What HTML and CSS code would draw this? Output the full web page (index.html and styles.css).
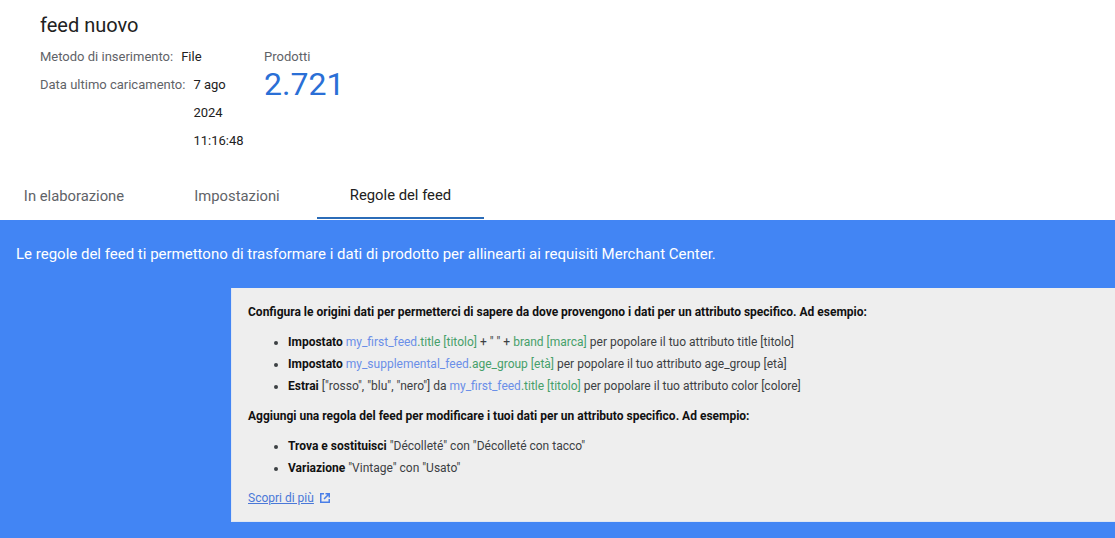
FILE: index.html
```html
<!DOCTYPE html>
<html lang="it">
<head>
<meta charset="utf-8">
<title>feed nuovo</title>
<link rel="stylesheet" href="styles.css">
</head>
<body>
<header class="head">
  <h1 class="title">feed nuovo</h1>
  <div class="summary">
    <div class="meta">
      <div class="row"><span class="label">Metodo di inserimento:</span><span class="value v1">File</span></div>
      <div class="row"><span class="label">Data ultimo caricamento:</span><span class="value v2">7 ago<br>2024<br>11:16:48</span></div>
    </div>
    <div class="stat">
      <div class="stat-label">Prodotti</div>
      <div class="stat-num">2.721</div>
    </div>
  </div>
</header>
<nav class="tabs">
  <a class="tab t1">In elaborazione</a>
  <a class="tab t2">Impostazioni</a>
  <a class="tab t3 active">Regole del feed</a>
</nav>
<section class="panel">
  <p class="lead">Le regole del feed ti permettono di trasformare i dati di prodotto per allinearti ai requisiti Merchant Center.</p>
  <div class="card">
    <p class="h">Configura le origini dati per permetterci di sapere da dove provengono i dati per un attributo specifico. Ad esempio:</p>
    <ul class="list">
      <li><b>Impostato</b> <span class="blue">my_first_feed</span><span class="green">.title [titolo]</span> + " " + <span class="green">brand [marca]</span> per popolare il tuo attributo title [titolo]</li>
      <li><b>Impostato</b> <span class="blue">my_supplemental_feed</span><span class="green">.age_group [età]</span> per popolare il tuo attributo age_group [età]</li>
      <li><b>Estrai</b> ["rosso", "blu", "nero"] da <span class="blue">my_first_feed</span><span class="green">.title [titolo]</span> per popolare il tuo attributo color [colore]</li>
    </ul>
    <p class="h">Aggiungi una regola del feed per modificare i tuoi dati per un attributo specifico. Ad esempio:</p>
    <ul class="list">
      <li><b>Trova e sostituisci</b> "Décolleté" con "Décolleté con tacco"</li>
      <li><b>Variazione</b> "Vintage" con "Usato"</li>
    </ul>
    <p class="more"><a class="link">Scopri di più</a><svg class="ext" viewBox="0 0 12 12" width="12" height="12" aria-hidden="true"><path d="M1 1H5V2.5H2.5V9.5H9.5V7H11V11H1Z" fill="#4a7fe8"/><path d="M6.5 1H11V5.5H9.5V3.6L5.6 7.5L4.5 6.4L8.4 2.5H6.5Z" fill="#4a7fe8"/></svg></p>
  </div>
</section>
</body>
</html>
```
FILE: styles.css
```css
* { box-sizing: border-box; }
html, body { margin: 0; height: 538px; overflow: hidden; }
body { background: #fff; font-family: Roboto, "Liberation Sans", sans-serif; color: #212121; display: flex; flex-direction: column; }
.head { height: 174px; padding: 13px 0 0 40px; }
.title { margin: 0; font-size: 20px; font-weight: 400; line-height: 25px; color: #212121; }
.summary { display: flex; margin-top: 5px; }
.meta { width: 224px; font-size: 13px; }
.row { display: flex; }
.label { color: #5f6368; line-height: 28px; white-space: nowrap; }
.value { color: #212121; line-height: 28px; white-space: nowrap; }
.v1 { margin-left: 8px; }
.v2 { margin-left: 8px; }
.stat-label { font-size: 13px; color: #5f6368; line-height: 28px; }
.stat-num { font-size: 32px; line-height: 26px; color: #2a6fd6; }
.tabs { display: flex; height: 46px; font-size: 14.8px; }
.tab { display: flex; align-items: center; justify-content: center; color: #5f6368; height: 45px; padding-bottom: 2px; }
.t1 { width: 148px; }
.t2 { width: 169px; padding-left: 9px; }
.t3 { width: 167px; }
.tab.active { color: #212121; border-bottom: 2px solid #2b6cb8; }
.panel { flex: 1; background: #4285f4; display: flex; flex-direction: column; align-items: flex-end; }
.lead { align-self: flex-start; margin: 0; padding: 24px 0 0 16px; height: 68px; font-size: 15px; line-height: 20px; color: #fff; }
.card { width: 884px; height: 234px; background: #eee; border-left: 1px solid #dfe6f2; border-bottom: 1px solid #dfe6f2; padding: 14px 16px 0; font-size: 12px; line-height: 22px; color: #3c4043; }
.h { margin: 0; font-weight: 700; color: #111; line-height: 20px; }
.list { margin: 9px 0 9px; padding-left: 40px; list-style: disc; }
.list li { height: 22px; }
.list b { color: #111; }
.blue { color: #6b8fe8; }
.green { color: #46a06a; }
.more { margin: -1px 0 0; line-height: 22px; display: flex; align-items: center; }
.link { color: #4a78d8; text-decoration: underline; }
.ext { margin-left: 5px; }
```
